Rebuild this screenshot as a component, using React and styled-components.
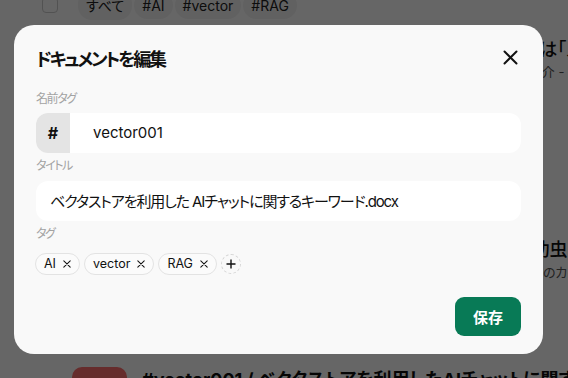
import React from 'react'
import styled, { createGlobalStyle } from 'styled-components'

const GlobalStyle = createGlobalStyle`
  html, body {
    margin: 0;
    padding: 0;
    height: 100%;
    overflow: hidden;
    background: #ffffff;
  }
  body {
    font-family: Inter, "Noto Sans CJK JP", sans-serif;
    font-feature-settings: "palt";
    color: #111;
  }
`

const Page = styled.div`
  margin-top: -14px;
  padding: 0 0 0 42px;
`

const FilterBar = styled.div`
  display: flex;
  align-items: center;
  height: 38px;
  gap: 2px;
`

const Check = styled.span`
  width: 14px;
  height: 14px;
  border: 1px solid #ccc;
  border-radius: 4px;
  margin-right: 18px;
`

const FilterPill = styled.span`
  padding: 5px 8px;
  border-radius: 14px;
  background: #f2f2f2;
  font-size: 14px;
  color: #222;
`

const List = styled.div`
  display: flex;
  flex-direction: column;
  padding-left: 30px;
`

const Item = styled.div`
  display: flex;
  gap: 15px;
  padding-top: 13px;
  min-height: ${(p) => p.$h}px;
  box-sizing: border-box;
`

const Thumb = styled.div`
  flex: none;
  width: 55px;
  height: 55px;
  border-radius: 10px;
  background: ${(p) => p.$color};
`

const ItemBody = styled.div`
  min-width: 0;
  white-space: nowrap;
`

const ItemTitle = styled.div`
  font-size: 18px;
  font-weight: ${(p) => (p.$bold ? 700 : 500)};
  line-height: 26px;
`

const ItemSub = styled.div`
  font-size: 13px;
  line-height: 18px;
  color: #555;
`

const Overlay = styled.div`
  position: fixed;
  inset: 0;
  background: rgba(0, 0, 0, 0.6);
  display: flex;
  align-items: center;
  justify-content: center;
  padding-right: 11px;
`

const Modal = styled.div`
  width: 529px;
  box-sizing: border-box;
  background: #f9f9f9;
  border-radius: 20px;
  padding: 20px 22px 18px;
  display: flex;
  flex-direction: column;
`

const Header = styled.div`
  display: flex;
  align-items: center;
  justify-content: space-between;
  height: 26px;
  margin-bottom: 21px;
`

const Title = styled.h2`
  margin: 0;
  font-size: 18px;
  letter-spacing: -2.2px;
  font-weight: 700;
  color: #111;
`

const CloseButton = styled.button`
  width: 22px;
  height: 22px;
  padding: 0;
  border: none;
  background: none;
  display: flex;
  align-items: center;
  justify-content: center;
  color: #111;
`

const Label = styled.div`
  font-size: 12px;
  line-height: 14px;
  letter-spacing: -1.4px;
  color: #a3a3a3;
  margin-bottom: ${(p) => p.$gap}px;
`

const InputBox = styled.div`
  display: flex;
  align-items: center;
  height: 40px;
  background: #fff;
  border-radius: 12px;
  overflow: hidden;
  margin-bottom: 6px;
  font-size: 15px;
  color: #111;
`

const Prefix = styled.span`
  align-self: stretch;
  width: 34px;
  display: flex;
  align-items: center;
  justify-content: center;
  background: #e4e4e4;
  font-weight: 700;
  font-size: 16px;
`

const InputText = styled.span`
  padding-left: ${(p) => p.$pad}px;
  letter-spacing: ${(p) => p.$tight || 0}px;
`

const Tags = styled.div`
  display: flex;
  align-items: center;
  gap: 4px;
  margin-top: 5px;
  margin-left: -1px;
`

const Tag = styled.span`
  display: inline-flex;
  align-items: center;
  gap: 7px;
  height: 22px;
  box-sizing: border-box;
  padding: 0 8px;
  border: 1px solid #e3e3e3;
  border-radius: 11px;
  background: #fbfbfb;
  font-size: 12.5px;
  color: #111;
`

const AddTag = styled.span`
  width: 18px;
  height: 18px;
  border: 1px dashed #d4d4d4;
  border-radius: 50%;
  display: flex;
  align-items: center;
  justify-content: center;
`

const Footer = styled.div`
  display: flex;
  justify-content: flex-end;
  margin-top: 22px;
`

const SaveButton = styled.button`
  width: 66px;
  height: 39px;
  border: none;
  border-radius: 9px;
  background: #087a56;
  color: #fff;
  font-family: inherit;
  font-size: 15px;
  font-weight: 700;
`

function Cross({ size, stroke }) {
  return (
    <svg width={size} height={size} viewBox="0 0 10 10" fill="none">
      <path
        d="M1 1 L9 9 M9 1 L1 9"
        stroke="currentColor"
        strokeWidth={stroke}
        strokeLinecap="round"
      />
    </svg>
  )
}

const tags = ['AI', 'vector', 'RAG']

export default function App() {
  return (
    <>
      <GlobalStyle />
      <Page>
        <FilterBar>
          <Check />
          <FilterPill>すべて</FilterPill>
          <FilterPill>#AI</FilterPill>
          <FilterPill>#vector</FilterPill>
          <FilterPill>#RAG</FilterPill>
        </FilterBar>
        <List>
          <Item $h={200}>
            <Thumb $color="#7aa7ff" />
            <ItemBody>
              <ItemTitle>#intro / 生成AI活用の第一歩でいちばん大切なことは「スタート」</ItemTitle>
              <ItemSub>AIの基本と最新の活用事例をわかりやすく丁寧に解説する入門資料の紹介 - 月刊テック</ItemSub>
            </ItemBody>
          </Item>
          <Item $h={130}>
            <Thumb $color="#ffd36e" />
            <ItemBody>
              <ItemTitle>#nature / 夏休み 自由研究に最適な昆虫の観察と幼虫の育て方</ItemTitle>
              <ItemSub>身近な生き物を観察して記録するための手順と夏の自由研究のまとめ方のカイコ飼育</ItemSub>
            </ItemBody>
          </Item>
          <Item $h={100}>
            <Thumb $color="#ff6e6e" />
            <ItemBody>
              <ItemTitle $bold>#vector001 / ベクタストアを利用したAIチャットに関するキーワード</ItemTitle>
            </ItemBody>
          </Item>
        </List>
      </Page>

      <Overlay>
        <Modal>
          <Header>
            <Title>ドキュメントを編集</Title>
            <CloseButton>
              <Cross size={15} stroke={1.3} />
            </CloseButton>
          </Header>

          <Label $gap={7}>名前タグ</Label>
          <InputBox>
            <Prefix>#</Prefix>
            <InputText $pad={23}>vector001</InputText>
          </InputBox>

          <Label $gap={8}>タイトル</Label>
          <InputBox>
            <InputText $pad={14} $tight={-1.1}>
              ベクタストアを利用した AIチャットに関するキーワード.docx
            </InputText>
          </InputBox>

          <Label $gap={7}>タグ</Label>
          <Tags>
            {tags.map((t) => (
              <Tag key={t}>
                {t}
                <Cross size={8} stroke={1.3} />
              </Tag>
            ))}
            <AddTag>
              <svg width="10" height="10" viewBox="0 0 10 10">
                <path d="M5 0.5 V9.5 M0.5 5 H9.5" stroke="#111" strokeWidth="1.4" />
              </svg>
            </AddTag>
          </Tags>

          <Footer>
            <SaveButton>保存</SaveButton>
          </Footer>
        </Modal>
      </Overlay>
    </>
  )
}
